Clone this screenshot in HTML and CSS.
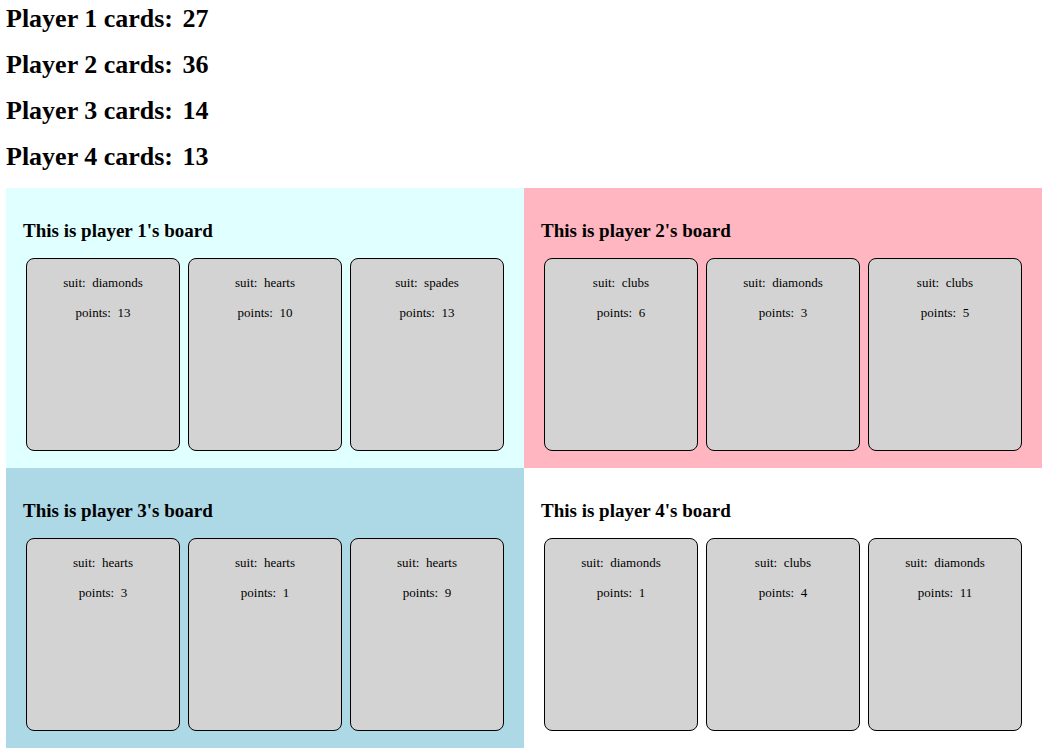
FILE: index.html
```html
<!DOCTYPE html>
<html>
<head>
<meta charset="utf-8">
<link rel="stylesheet" href="styles.css">
</head>
<body>
<div class="counts">
  <h2 class="count">Player 1 cards: <span class="num">27</span></h2>
  <h2 class="count">Player 2 cards: <span class="num">36</span></h2>
  <h2 class="count">Player 3 cards: <span class="num">14</span></h2>
  <h2 class="count">Player 4 cards: <span class="num">13</span></h2>
</div>
<div class="boards">
  <section class="board board-cyan">
    <h3 class="board-title">This is player 1's board</h3>
    <div class="cards">
      <div class="card"><p class="line">suit:&nbsp; diamonds</p><p class="line">points:&nbsp; 13</p></div>
      <div class="card"><p class="line">suit:&nbsp; hearts</p><p class="line">points:&nbsp; 10</p></div>
      <div class="card"><p class="line">suit:&nbsp; spades</p><p class="line">points:&nbsp; 13</p></div>
    </div>
  </section>
  <section class="board board-pink">
    <h3 class="board-title">This is player 2's board</h3>
    <div class="cards">
      <div class="card"><p class="line">suit:&nbsp; clubs</p><p class="line">points:&nbsp; 6</p></div>
      <div class="card"><p class="line">suit:&nbsp; diamonds</p><p class="line">points:&nbsp; 3</p></div>
      <div class="card"><p class="line">suit:&nbsp; clubs</p><p class="line">points:&nbsp; 5</p></div>
    </div>
  </section>
  <section class="board board-blue">
    <h3 class="board-title">This is player 3's board</h3>
    <div class="cards">
      <div class="card"><p class="line">suit:&nbsp; hearts</p><p class="line">points:&nbsp; 3</p></div>
      <div class="card"><p class="line">suit:&nbsp; hearts</p><p class="line">points:&nbsp; 1</p></div>
      <div class="card"><p class="line">suit:&nbsp; hearts</p><p class="line">points:&nbsp; 9</p></div>
    </div>
  </section>
  <section class="board board-white">
    <h3 class="board-title">This is player 4's board</h3>
    <div class="cards">
      <div class="card"><p class="line">suit:&nbsp; diamonds</p><p class="line">points:&nbsp; 1</p></div>
      <div class="card"><p class="line">suit:&nbsp; clubs</p><p class="line">points:&nbsp; 4</p></div>
      <div class="card"><p class="line">suit:&nbsp; diamonds</p><p class="line">points:&nbsp; 11</p></div>
    </div>
  </section>
</div>
</body>
</html>
```
FILE: styles.css
```css
html, body {
  background: #ffffff;
}
body {
  margin: 6px;
  font-family: "Liberation Serif", "Times New Roman", serif;
  color: #000000;
}
.counts {
  display: flex;
  flex-direction: column;
  gap: 19px;
  margin-top: -1px;
  margin-bottom: 18px;
}
.count {
  margin: 0;
  font-size: 26px;
  line-height: 27px;
  font-weight: bold;
}
.num {
  margin-left: 3px;
}
.boards {
  display: grid;
  grid-template-columns: 518px 518px;
}
.board {
  height: 280px;
  box-sizing: border-box;
  padding: 16px;
}
.board-cyan { background: #e0ffff; }
.board-pink { background: #ffb6c1; }
.board-blue { background: #add8e6; }
.board-white { background: #ffffff; }
.board-title {
  margin: 16px 0 12px 1px;
  font-size: 19px;
  line-height: 22px;
  font-weight: bold;
}
.cards {
  display: flex;
}
.card {
  width: 154px;
  height: 193px;
  box-sizing: border-box;
  margin: 4px;
  background: #d3d3d3;
  border: 1px solid #000000;
  border-radius: 8px;
  text-align: center;
  font-size: 13px;
  padding-top: 16px;
}
.line {
  margin: 0 0 15px;
  line-height: 15px;
}
```
